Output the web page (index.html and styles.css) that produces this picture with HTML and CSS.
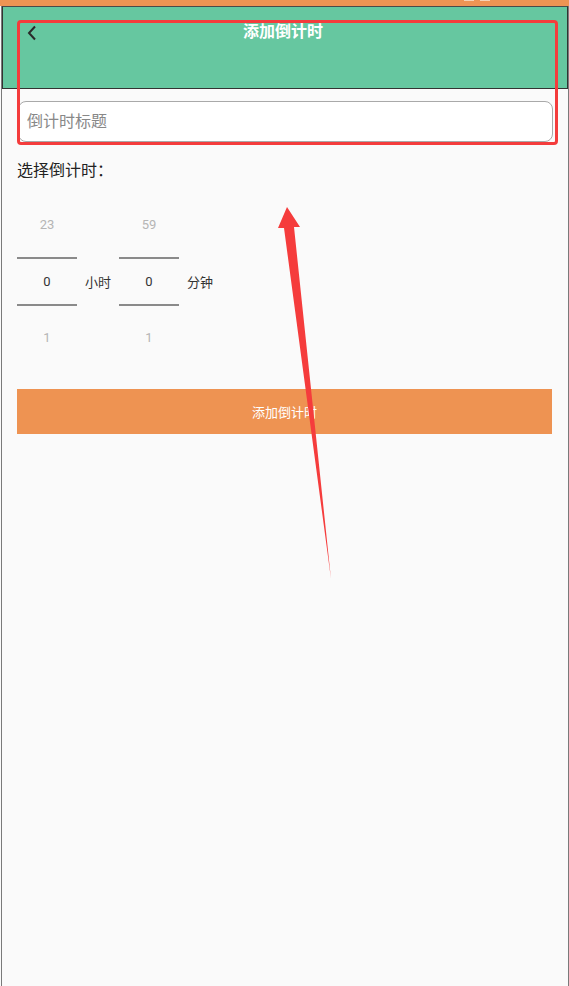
FILE: index.html
```html
<!DOCTYPE html>
<html lang="zh-CN">
<head>
    <meta charset="utf-8">
    <title>添加倒计时</title>
    <link rel="stylesheet" href="styles.css">
</head>
<body>

<div class="frame">
    <div class="statusbar">
        <span class="status-icons"><i></i><i></i></span>
    </div>

    <div class="header">
        <span class="back">
            <svg width="10" height="16" viewBox="0 0 10 16"><path d="M8 1.5 L2 8 L8 14.5" fill="none" stroke="#2a2a2a" stroke-width="2"/></svg>
        </span>
        <h1 class="title">添加倒计时</h1>
    </div>

    <div class="content">
        <input type="text" class="title-input" placeholder="倒计时标题">

        <p class="label">选择倒计时：</p>

        <div class="picker">
            <div class="pick-col">
                <div class="pick-item faded">23</div>
                <div class="pick-item current">0</div>
                <div class="pick-item faded">1</div>
            </div>
            <span class="unit">小时</span>
            <div class="pick-col">
                <div class="pick-item faded">59</div>
                <div class="pick-item current">0</div>
                <div class="pick-item faded">1</div>
            </div>
            <span class="unit">分钟</span>
        </div>

        <button class="add-btn">添加倒计时</button>
    </div>

    <!-- annotation overlay -->
    <div class="mark-box"></div>
    <svg class="mark-arrow" width="569" height="986" viewBox="0 0 569 986">
        <polygon points="287,207 300,227 294,227 331,579 284,228 278,228" fill="#f53c3c"/>
    </svg>
</div>

</body>
</html>
```

FILE: styles.css
```css
html, body {
    margin: 0;
    padding: 0;
}

body {
    font-family: Roboto, "Noto Sans CJK SC", sans-serif;
    background: #fafafa;
}

.frame {
    position: relative;
    width: 566px;
    height: 986px;
    margin-left: 1px;
    border-left: 1px solid #7a7a7a;
    border-right: 1px solid #7a7a7a;
    background: #fafafa;
}

.statusbar {
    height: 6px;
    background: #ee9454;
    margin-left: -2px;
    margin-right: -2px;
    position: relative;
}

.status-icons {
    position: absolute;
    right: 80px;
    top: 0;
    display: flex;
    gap: 6px;
}

.status-icons i {
    display: block;
    width: 10px;
    height: 1px;
    background: #f6d2b6;
}

.header {
    height: 83px;
    background: #66c7a0;
    border: 1px solid #333;
    border-top-color: #4a4a4a;
    position: relative;
    box-sizing: border-box;
}

.back {
    position: absolute;
    left: 24px;
    top: 18px;
}

.title {
    margin: 0;
    padding-right: 4px;
    text-align: center;
    font-size: 16px;
    font-weight: bold;
    color: #fff;
    line-height: 50px;
}

.content {
    padding: 0 15px 0 15px;
}

.title-input {
    display: block;
    box-sizing: border-box;
    width: 535px;
    height: 41px;
    margin: 12px 0 0 1px;
    padding: 0 8px;
    border: 1px solid #a9a9a9;
    border-radius: 8px;
    background: #fff;
    font-family: Roboto, "Noto Sans CJK SC", sans-serif;
    font-size: 16px;
    outline: none;
}

.title-input::placeholder {
    color: #888;
}

.label {
    margin: 18px 0 0;
    font-size: 16px;
    line-height: 22px;
    color: #222;
}

.picker {
    display: flex;
    align-items: center;
    margin-top: 19px;
}

.pick-col {
    width: 60px;
    display: flex;
    flex-direction: column;
    text-align: center;
    font-size: 13px;
}

.pick-item {
    height: 48px;
    line-height: 48px;
}

.pick-item.faded {
    color: #b5b5b5;
}

.pick-item.current {
    height: 45px;
    line-height: 45px;
    color: #333;
    border-top: 2px solid #8a8a8a;
    border-bottom: 2px solid #8a8a8a;
    margin: 8px 0;
}

.unit {
    font-size: 13px;
    color: #333;
    width: 42px;
    padding-left: 8px;
    box-sizing: border-box;
}

.add-btn {
    display: block;
    width: 535px;
    height: 45px;
    margin-top: 27px;
    border: none;
    background: #ee9352;
    color: #fff;
    font-family: Roboto, "Noto Sans CJK SC", sans-serif;
    font-size: 13px;
}

.mark-box {
    position: absolute;
    left: 15px;
    top: 20px;
    width: 535px;
    height: 119px;
    border: 3px solid #f43c3c;
    border-radius: 4px;
}

.mark-arrow {
    position: absolute;
    left: -2px;
    top: 0;
    pointer-events: none;
}
```
